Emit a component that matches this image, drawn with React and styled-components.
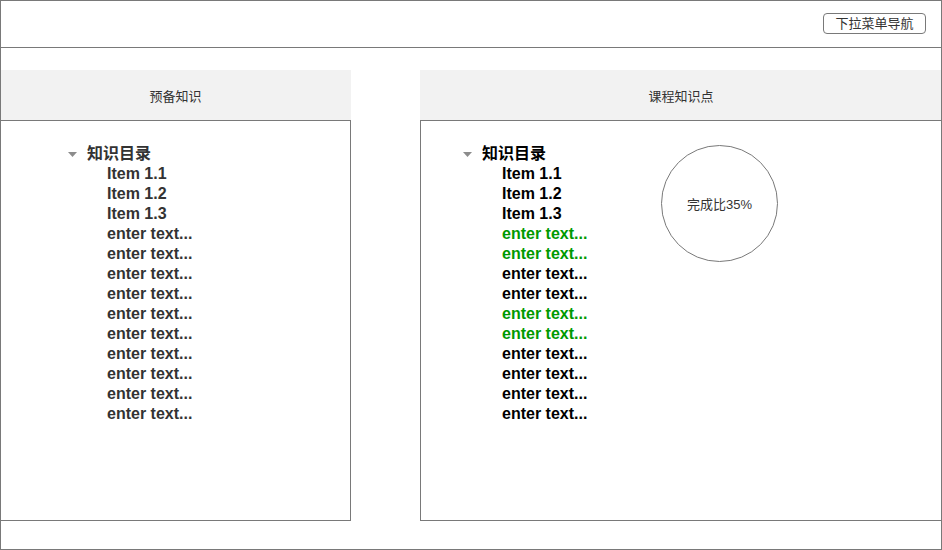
import React from 'react';
import styled, { createGlobalStyle } from 'styled-components';

const GlobalStyle = createGlobalStyle`
  body {
    margin: 0;
    background: #fff;
    font-family: "Liberation Sans", "Noto Sans CJK SC", sans-serif;
  }
`;

const Frame = styled.div`
  box-sizing: border-box;
  width: 942px;
  height: 550px;
  border: 1px solid #797979;
  display: flex;
  flex-direction: column;
  overflow: hidden;
`;

const TopBar = styled.div`
  height: 46px;
  border-bottom: 1px solid #797979;
  display: flex;
  align-items: center;
  justify-content: flex-end;
  padding-right: 15px;
`;

const NavButton = styled.button`
  box-sizing: border-box;
  height: 21px;
  width: 103px;
  padding: 0;
  margin-top: -1px;
  border: 1px solid #797979;
  border-radius: 4px;
  background: #fff;
  color: #333;
  font-family: "Liberation Sans", "Noto Sans CJK SC", sans-serif;
  font-size: 13px;
  line-height: 19px;
  cursor: pointer;
`;

const PanelRow = styled.div`
  display: flex;
  gap: 69px;
  margin: 22px -1px 0;
`;

const Panel = styled.section`
  width: ${(p) => p.$width}px;
  display: flex;
  flex-direction: column;
`;

const PanelHead = styled.div`
  height: 50px;
  background: #f2f2f2;
  display: flex;
  align-items: center;
  justify-content: center;
  color: #333;
  font-size: 13px;
`;

const PanelBody = styled.div`
  box-sizing: border-box;
  height: 401px;
  border: 1px solid #797979;
  display: flex;
  align-items: flex-start;
  padding: 23px 0 0 ${(p) => p.$indent - 1}px;
`;

const Tree = styled.div`
  width: ${(p) => p.$width || 'auto'};
  flex-shrink: 0;
  font-weight: bold;
  color: ${(p) => p.$color};
`;

const TreeHead = styled.div`
  display: flex;
  align-items: center;
  gap: 10px;
  height: 20px;
  font-size: 16px;
  line-height: 20px;
`;

const TreeItem = styled.div`
  padding-left: 39px;
  font-size: 16px;
  line-height: 20px;
  height: 20px;
  color: ${(p) => (p.$done ? '#009900' : 'inherit')};
`;

const Caret = () => (
  <svg width="9" height="5" viewBox="0 0 9 5">
    <polygon points="0,0 9,0 4.5,5" fill="#8c8c8c" />
  </svg>
);

const Progress = styled.div`
  box-sizing: border-box;
  width: 117px;
  height: 117px;
  margin-top: 1px;
  border: 1px solid #797979;
  border-radius: 50%;
  display: flex;
  align-items: center;
  justify-content: center;
  color: #333;
  font-size: 13px;
`;

const items = ['Item 1.1', 'Item 1.2', 'Item 1.3', ...Array(10).fill('enter text...')];
const doneRows = [3, 4, 7, 8];

const TreeList = ({ color, width, marks = [] }) => (
  <Tree $color={color} $width={width}>
    <TreeHead>
      <Caret />
      <span>知识目录</span>
    </TreeHead>
    {items.map((label, i) => (
      <TreeItem key={i} $done={marks.includes(i)}>{label}</TreeItem>
    ))}
  </Tree>
);

const App = () => (
  <>
    <GlobalStyle />
    <Frame>
      <TopBar>
        <NavButton>下拉菜单导航</NavButton>
      </TopBar>
      <PanelRow>
        <Panel $width={351}>
          <PanelHead>预备知识</PanelHead>
          <PanelBody $indent={68}>
            <TreeList color="#333" />
          </PanelBody>
        </Panel>
        <Panel $width={522}>
          <PanelHead>课程知识点</PanelHead>
          <PanelBody $indent={43}>
            <TreeList color="#000" width="198px" marks={doneRows} />
            <Progress>完成比35%</Progress>
          </PanelBody>
        </Panel>
      </PanelRow>
    </Frame>
  </>
);

export default App;
